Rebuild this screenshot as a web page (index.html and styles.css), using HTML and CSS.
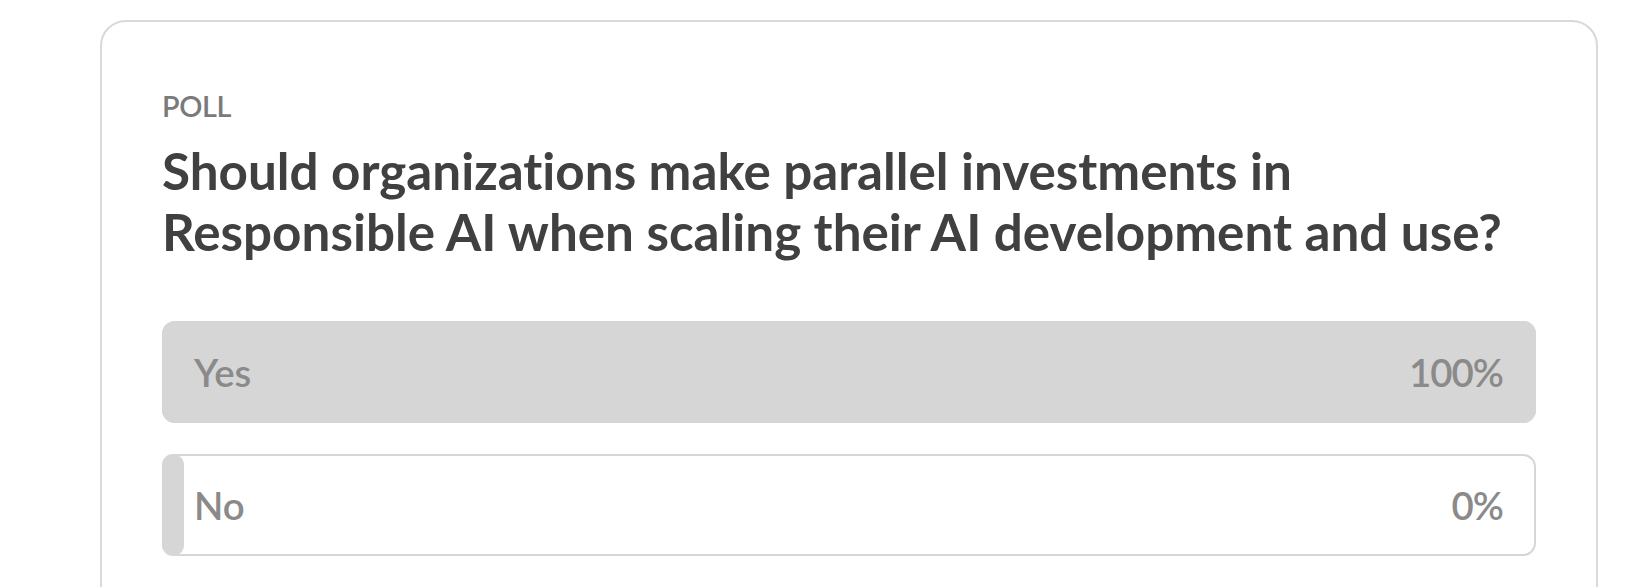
FILE: index.html
```html
<!DOCTYPE html>
<html lang="en">
<head>
<meta charset="utf-8">
<title>Poll</title>
<link rel="stylesheet" href="styles.css">
</head>
<body>
<section class="poll-card">
  <div class="poll-label">POLL</div>
  <h2 class="poll-question">Should organizations make parallel investments in Responsible AI when scaling their AI development and use?</h2>
  <ul class="poll-options">
    <li class="poll-option is-leading">
      <span class="poll-fill" style="width: 100%"></span>
      <span class="poll-option-label">Yes</span>
      <span class="poll-option-pct">100%</span>
    </li>
    <li class="poll-option">
      <span class="poll-fill is-empty" style="width: 0%"></span>
      <span class="poll-option-label">No</span>
      <span class="poll-option-pct">0%</span>
    </li>
  </ul>
</section>
</body>
</html>
```
FILE: styles.css
```css
html, body {
  margin: 0;
  padding: 0;
  background: #ffffff;
}

body {
  padding: 20px 48px 0 100px;
  font-family: "Segoe UI", "Lato", "Open Sans", sans-serif;
  font-variant-ligatures: none;
  overflow: hidden;
}

.poll-card {
  box-sizing: border-box;
  border: 2px solid #d9d9d9;
  border-radius: 26px;
  padding: 67px 60px 60px;
  min-height: 700px;
}

.poll-label {
  font-size: 28.8px;
  line-height: 34px;
  font-weight: 600;
  letter-spacing: -0.4px;
  color: #7a7a7a;
  margin: 0;
}

.poll-question {
  margin: 17px 0 0;
  font-size: 51.2px;
  line-height: 61px;
  font-weight: 700;
  color: #404040;
}

.poll-options {
  list-style: none;
  margin: 59px 0 0;
  padding: 0;
  display: flex;
  flex-direction: column;
  gap: 31px;
}

.poll-option {
  position: relative;
  box-sizing: border-box;
  height: 102px;
  border: 2px solid #d6d6d6;
  border-radius: 13px;
  display: flex;
  align-items: center;
  justify-content: space-between;
  padding: 0 31px 0 30px;
  font-size: 38.4px;
  font-weight: 600;
  color: #8a8a8a;
}

.poll-option-pct {
  letter-spacing: -1px;
}

.poll-fill {
  position: absolute;
  top: -2px;
  bottom: -2px;
  left: -2px;
  background: #d6d6d6;
  border-radius: 13px;
  min-width: 22px;
}

.poll-fill[style*="100%"] {
  width: calc(100% + 4px) !important;
}

.poll-option-label,
.poll-option-pct {
  position: relative;
}
```
